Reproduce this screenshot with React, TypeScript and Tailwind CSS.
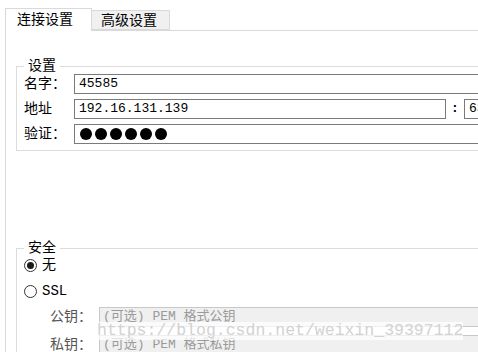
import React from 'react';

const cjk = "font-['Liberation_Mono','Noto_Sans_CJK_SC',monospace]";

function Legend({ text }: { text: string }) {
    return (
        <div className="absolute left-[7px] top-[-9px] bg-white px-[4px] text-[14px] leading-[16px] text-black">
            {text}
        </div>
    );
}

function Radio({ checked, label }: { checked?: boolean; label: string }) {
    return (
        <div className="flex items-center h-[16px] gap-[5px]">
            <div className="w-[13px] h-[13px] rounded-full border border-[#333] bg-white flex items-center justify-center">
                {checked && <div className="w-[7px] h-[7px] rounded-full bg-[#1a1a1a]" />}
            </div>
            <span className="text-[14px] leading-[16px]">{label}</span>
        </div>
    );
}

export default function App() {
    const inputBox = "h-[20px] border border-[#7a7a7a] bg-white flex items-center pl-[4px] text-[13px] leading-[16px]";
    const keyBox = "h-[20px] w-[420px] border border-[#c8c8c8] bg-[#f0f0f0] flex items-center pl-[3px] text-[13px] leading-[16px] text-[#9a9a9a]";

    return (
        <div className={`w-[478px] h-[352px] overflow-hidden bg-white relative text-black ${cjk}`}>
            {/* tabs */}
            <div className="flex items-end pl-[5px] pt-[8px] h-[30px]">
                <div className="relative z-10 -mb-px h-[23px] w-[87px] border border-b-0 border-[#d9d9d9] bg-white flex items-start pt-[3px] pl-[11px] text-[14px] leading-[16px]">
                    连接设置
                </div>
                <div className="h-[20px] w-[79px] -ml-px border border-[#d9d9d9] bg-[#f0f0f0] flex items-start pt-[2px] pl-[9px] text-[14px] leading-[16px]">
                    高级设置
                </div>
            </div>

            {/* panel */}
            <div className="ml-[5px] w-[520px] border-t border-l border-[#d9d9d9] pt-[35px] pl-[10px]">
                {/* 设置 */}
                <div className="relative w-[520px] border border-r-0 border-[#dcdcdc] pt-[7px] pb-[6px] pl-[7px] flex flex-col gap-[5px]">
                    <Legend text="设置" />
                    <div className="flex items-center">
                        <span className="w-[50px] text-[14px] leading-[16px]">名字：</span>
                        <div className={`${inputBox} w-[440px]`}>45585</div>
                    </div>
                    <div className="flex items-center">
                        <span className="w-[50px] text-[14px] leading-[16px]">地址</span>
                        <div className={`${inputBox} w-[372px]`}>192.16.131.139</div>
                        <span className="w-[18px] text-center text-[13px] font-bold">:</span>
                        <div className={`${inputBox} w-[60px] pl-[2px]`}>6379</div>
                    </div>
                    <div className="flex items-center">
                        <span className="w-[50px] text-[14px] leading-[16px]">验证：</span>
                        <div className={`${inputBox} w-[440px] gap-[3px] pl-[5px]`}>
                            {[0, 1, 2, 3, 4, 5].map((i) => (
                                <div key={i} className="w-[12px] h-[12px] rounded-full bg-black" />
                            ))}
                        </div>
                    </div>
                </div>

                {/* 安全 */}
                <div className="relative mt-[97px] w-[520px] h-[120px] border-t border-l border-[#dcdcdc] pt-[8px] pl-[7px] flex flex-col">
                    <Legend text="安全" />
                    <Radio checked label="无" />
                    <div className="mt-[10px]">
                        <Radio label="SSL" />
                    </div>
                    <div className="mt-[8px] pl-[26px] flex flex-col gap-[8px]">
                        <div className="flex items-center">
                            <span className="w-[49px] text-[14px] leading-[16px] text-[#555]">公钥：</span>
                            <div className={keyBox}>(可选) PEM 格式公钥</div>
                        </div>
                        <div className="flex items-center">
                            <span className="w-[49px] text-[14px] leading-[16px] text-[#555]">私钥：</span>
                            <div className={keyBox}>(可选) PEM 格式私钥</div>
                        </div>
                    </div>
                </div>
            </div>

            {/* watermark */}
            <div className="absolute left-[97px] top-[322px] text-[16.5px] leading-[18px] text-[#d2d2d2] font-['Liberation_Mono',monospace] whitespace-nowrap bg-white/70">
                https://blog.csdn.net/weixin_39397112
            </div>
        </div>
    );
}
